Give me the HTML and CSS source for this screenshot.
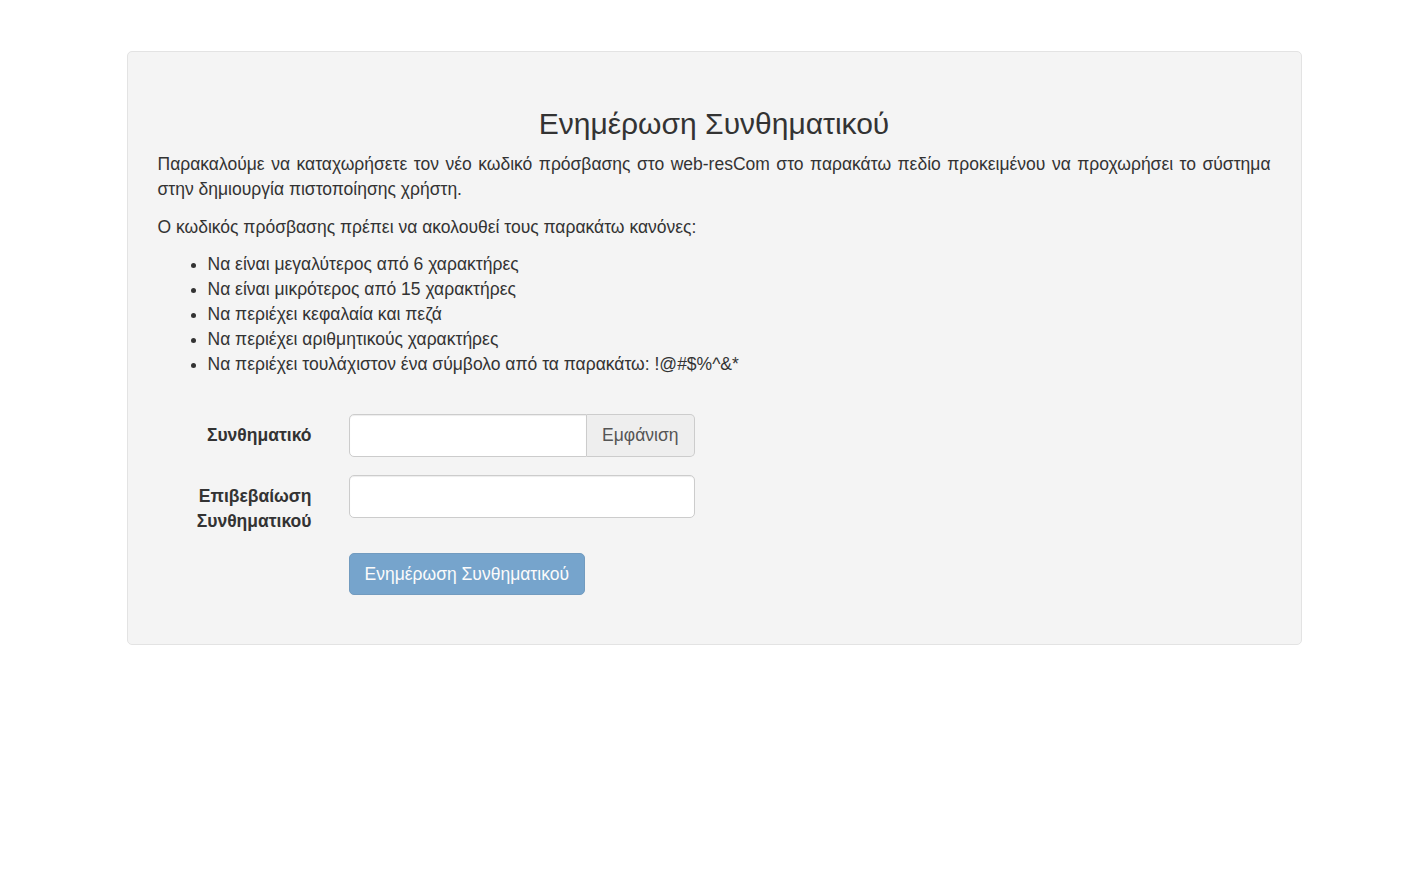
FILE: index.html
```html
<!DOCTYPE html>
<html>
 <head>
  <meta charset="utf-8">
  <title>Ενημέρωση Συνθηματικού</title>
  <link rel="stylesheet" href="styles.css">
 </head>
 <body>
  <div class="container">
   <div class="well">
    <h3 class="title">Ενημέρωση Συνθηματικού</h3>
    <p class="intro">Παρακαλούμε να καταχωρήσετε τον νέο κωδικό πρόσβασης στο web-resCom στο παρακάτω πεδίο προκειμένου να προχωρήσει το σύστημα στην δημιουργία πιστοποίησης χρήστη.</p>
    <p>Ο κωδικός πρόσβασης πρέπει να ακολουθεί τους παρακάτω κανόνες:</p>
    <ul class="rules">
     <li>Να είναι μεγαλύτερος από 6 χαρακτήρες</li>
     <li>Να είναι μικρότερος από 15 χαρακτήρες</li>
     <li>Να περιέχει κεφαλαία και πεζά</li>
     <li>Να περιέχει αριθμητικούς χαρακτήρες</li>
     <li>Να περιέχει τουλάχιστον ένα σύμβολο από τα παρακάτω: !@#$%^&amp;*</li>
    </ul>

    <form class="form-horizontal">
     <div class="form-group">
      <label class="control-label" for="pwd">Συνθηματικό</label>
      <div class="input-group">
       <input type="password" id="pwd" class="form-control">
       <span class="input-group-addon">Εμφάνιση</span>
      </div>
     </div>
     <div class="form-group">
      <label class="control-label" for="pwd2">Επιβεβαίωση Συνθηματικού</label>
      <input type="password" id="pwd2" class="form-control single">
     </div>
     <div class="form-group">
      <div class="control-label"></div>
      <button type="button" class="btn btn-primary" disabled>Ενημέρωση Συνθηματικού</button>
     </div>
    </form>
   </div>
  </div>
 </body>
</html>
```

FILE: styles.css
```css
body {
 margin:      0;
 font-family: "Liberation Sans", Arial, Helvetica, sans-serif;
 font-size:   17.5px;
 line-height: 25px;
 color:       #333333;
 background:  #ffffff;
}

.container {
 width:  1175px;
 margin: 51px auto 0;
}

.well {
 background:    #f4f4f4;
 border:        1px solid #e3e3e3;
 border-radius: 5px;
 padding:       54.5px 30px 48.5px;
}

.title {
 margin:      0 0 12.5px;
 font-size:   30px;
 font-weight: normal;
 line-height: 33px;
 text-align:  center;
}

p {
 margin: 0 0 12.5px;
}

.intro {
 text-align: justify;
}

.rules {
 margin:       0 0 12.5px;
 padding-left: 50px;
}

.form-horizontal {
 margin-top: 37px;
}

.form-group {
 display:       flex;
 align-items:   flex-start;
 margin-bottom: 18.75px;
}

.form-group:last-child {
 margin-bottom: 0;
}

.control-label {
 width:        154px;
 margin-right: 37px;
 padding-top:  8.75px;
 font-weight:  bold;
 text-align:   right;
}

.input-group {
 display: flex;
 width:   346px;
}

.form-control {
 box-sizing:    border-box;
 height:        42.5px;
 padding:       7.5px 15px;
 font:          inherit;
 color:         #555555;
 background:    #ffffff;
 border:        1px solid #cccccc;
 border-radius: 5px;
 box-shadow:    inset 0 1px 1px rgba(0,0,0,.075);
 outline:       none;
}

.form-control.single {
 width: 346px;
}

.input-group .form-control {
 flex:                       1;
 min-width:                  0;
 border-top-right-radius:    0;
 border-bottom-right-radius: 0;
}

.input-group-addon {
 box-sizing:                 border-box;
 height:                     42.5px;
 padding:                    7.5px 15px;
 color:                      #555555;
 background:                 #eeeeee;
 border:                     1px solid #cccccc;
 border-left:                0;
 border-radius:              0 5px 5px 0;
}

.btn {
 box-sizing:    border-box;
 height:        42.5px;
 padding:       7.5px 15px;
 font:          inherit;
 border-radius: 5px;
 cursor:        not-allowed;
}

.btn-primary {
 color:      #ffffff;
 background: #337ab7;
 border:     1px solid #2e6da4;
 opacity:    .65;
}
```
